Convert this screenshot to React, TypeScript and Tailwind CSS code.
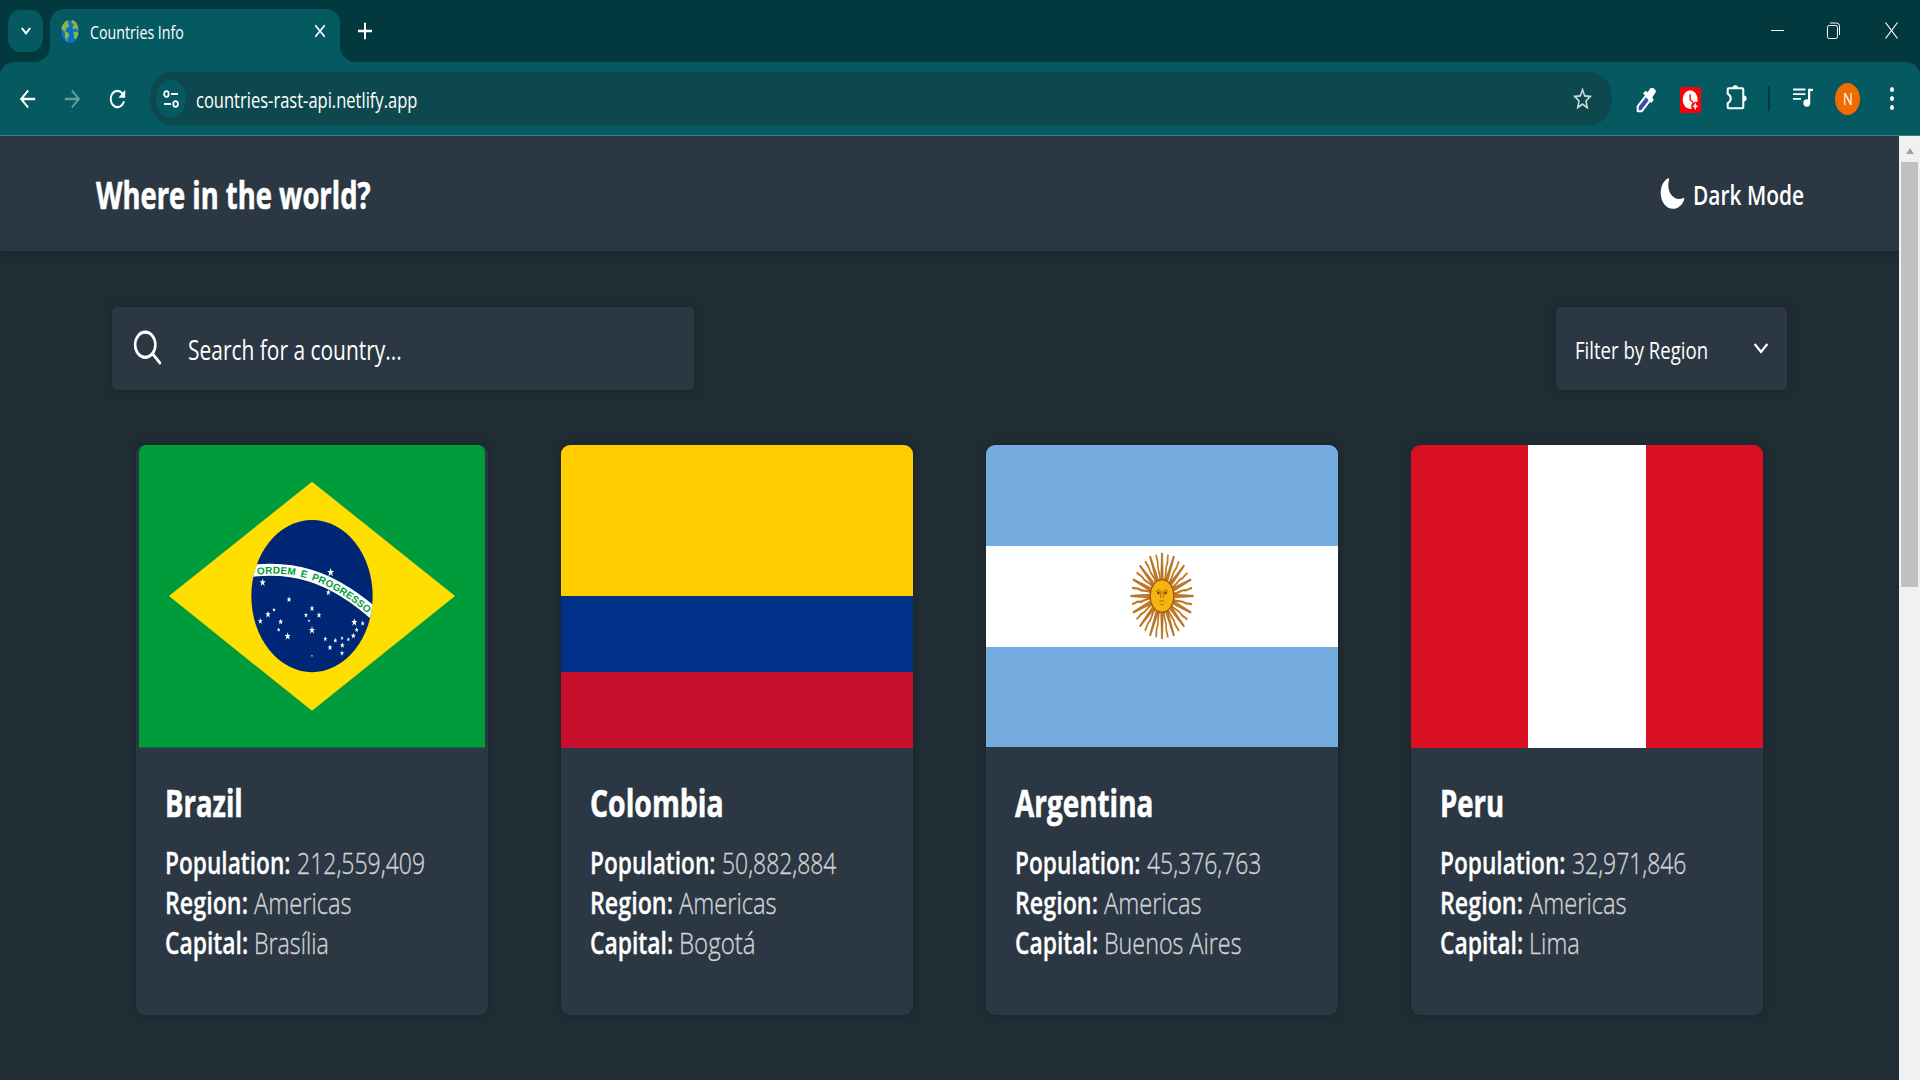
import { useLayoutEffect, useRef, useState } from "react";
import type { ReactNode } from "react";
import { MdAdd, MdArrowBack, MdArrowForward, MdClose, MdRefresh, MdStarBorder } from "react-icons/md";
import { IoMoon, IoSearchOutline } from "react-icons/io5";

/** One line of text condensed horizontally to an exact width. */
function Fit({ w, className = "", children }: { w: number; className?: string; children: ReactNode }) {
  const ref = useRef<HTMLSpanElement>(null);
  const [scale, setScale] = useState(0.8);
  useLayoutEffect(() => {
    if (ref.current) setScale(w / ref.current.offsetWidth);
  }, [w, children]);
  return (
    <span className={`block whitespace-nowrap ${className}`} style={{ width: w }}>
      <span ref={ref} className="inline-block origin-left" style={{ transform: `scaleX(${scale})` }}>
        {children}
      </span>
    </span>
  );
}

function Globe() {
  return (
    <svg viewBox="0 0 60 76" preserveAspectRatio="none" className="h-[26px] w-5">
      <ellipse cx="30" cy="39" rx="28" ry="36" fill="#0b6fc7" stroke="#17405a" strokeWidth="2" />
      <path d="M8 20 L18 8 L28 6 L24 16 L28 24 L20 30 L16 40 L6 34 L4 28Z" fill="#86b83c" />
      <path d="M14 38 L26 44 L28 52 L22 60 L22 70 L15 58Z" fill="#86b83c" />
      <path d="M36 5 L48 12 L55 26 L54 36 L46 30 L40 34 L37 26 L42 20 L34 14Z" fill="#86b83c" />
      <path d="M40 40 L52 40 L56 46 L48 62 L43 60Z" fill="#86b83c" />
      <path d="M20 2 L25 10 M34 2 L30 10" stroke="#24465a" strokeWidth="3" />
    </svg>
  );
}

function TabStrip() {
  return (
    <div className="flex h-[62px] items-start bg-[#02393e]">
      <div className="mt-2.5 ml-2 flex h-[42px] w-[35px] items-center justify-center rounded-[12px/14px] bg-[#045a60]">
        <svg viewBox="0 0 10 8" preserveAspectRatio="none" className="h-2 w-2.5 fill-none stroke-white stroke-2">
          <path d="M.8 1 L5 6.3 L9.2 1" />
        </svg>
      </div>
      <div className="relative ml-[7px] flex h-[53px] w-[290px] items-start self-end rounded-t-[14px] bg-[#045a60]">
        <svg viewBox="0 0 16 16" className="absolute bottom-0 -left-4 size-4 fill-[#045a60]">
          <path d="M16 0 V16 H0 A16 16 0 0 0 16 0Z" />
        </svg>
        <svg viewBox="0 0 16 16" className="absolute -right-4 bottom-0 size-4 fill-[#045a60]">
          <path d="M0 0 V16 H16 A16 16 0 0 1 0 0Z" />
        </svg>
        <div className="mt-[9px] ml-2.5">
          <Globe />
        </div>
        <Fit w={93.5} className="mt-[11px] ml-[9.5px] text-[19px] leading-[24px] text-white">Countries Info</Fit>
        <MdClose preserveAspectRatio="none" className="mt-[11px] ml-[128px] h-[22px] w-[18px] text-white" />
      </div>
      <MdAdd preserveAspectRatio="none" className="mt-[17px] ml-[13px] h-7 w-6 text-white" />
      <div className="mt-[22px] mr-[22px] ml-auto flex h-[17px] items-center">
        <div className="h-[1.5px] w-[13px] bg-white" />
        <svg viewBox="0 0 13 17" className="ml-[43px] h-[17px] w-[13px] fill-none stroke-white">
          <rect x=".5" y="3.5" width="10" height="13" rx="1.8" />
          <path d="M3 1 H9.5 Q12.5 1 12.5 4 V13" />
        </svg>
        <svg viewBox="0 0 13 17" className="ml-[45px] h-[17px] w-[13px] fill-none stroke-white">
          <path d="M.5 .5 L12.5 16.5 M12.5 .5 L.5 16.5" strokeWidth="1.2" />
        </svg>
      </div>
    </div>
  );
}

function Toolbar() {
  return (
    <div className="bg-[#02393e]">
      <div className="flex h-[74px] items-center rounded-t-[14px] border-b border-[#3b828a] bg-[#045a60] text-white">
        <MdArrowBack preserveAspectRatio="none" className="ml-4 h-7 w-[23px]" />
        <MdArrowForward preserveAspectRatio="none" className="ml-[22px] h-7 w-[23px] text-[#669ba0]" />
        <MdRefresh preserveAspectRatio="none" className="ml-[22px] h-7 w-[23px]" />
        <div className="ml-[21px] flex h-[53px] w-[1462px] items-center rounded-[22px/26px] bg-[#0e484f]">
          <div className="ml-1.5 flex h-[38px] w-[30px] items-center justify-center rounded-[50%] bg-[#045a60]">
            <svg viewBox="0 0 16 18" className="h-[18px] w-4 fill-none stroke-white stroke-[1.8]">
              <ellipse cx="3.4" cy="4" rx="2.3" ry="2.9" />
              <path d="M8 4 H15 M1 14 H8" />
              <ellipse cx="12.6" cy="14" rx="2.3" ry="2.9" />
            </svg>
          </div>
          <Fit w={221.5} className="ml-[10px] text-[22px] leading-[30px]">countries-rast-api.netlify.app</Fit>
          <MdStarBorder preserveAspectRatio="none" className="mr-[18px] ml-auto h-7 w-[23px] text-[#c9d6d8]" />
        </div>
        <svg viewBox="0 0 60 78" preserveAspectRatio="none" className="mt-0.5 ml-6 h-[26px] w-5">
          <path d="M5 73 L5 58 L30 26 L42 40 L17 73Z" fill="#3949b8" stroke="#fff" strokeWidth="6" strokeLinejoin="round" />
          <path d="M21 19 L29 11 L35 16 L43 4 Q56 -1 60 14 L49 31 L53 39 L46 48Z" fill="#fff" />
        </svg>
        <svg viewBox="0 0 62 78" preserveAspectRatio="none" className="mt-0.5 ml-6 h-[26px] w-[21px]">
          <rect width="62" height="78" rx="5" fill="#fb0006" />
          <ellipse cx="30" cy="38" rx="22" ry="28" fill="#fff" />
          <path d="M30 22 V38 L38 46" fill="none" stroke="#fb0006" strokeWidth="4" />
          <ellipse cx="46" cy="58" rx="13" ry="14" fill="#fb0006" />
          <path d="M45 46 L48 55 L54 58 L48 61 L45 70 L42 61 L36 58 L42 55Z" fill="#fff" />
        </svg>
        <svg viewBox="0 0 62 76" preserveAspectRatio="none" className="-mt-0.5 ml-[25px] h-[25px] w-[21px]">
          <path
            d="M5 13 Q5 10 8 10 H48 Q51 10 51 13 V68 Q51 71 48 71 H8 Q5 71 5 68 V55 Q14 50 14 41 Q14 32 5 27Z"
            fill="none"
            stroke="#fff"
            strokeWidth="6"
          />
          <path d="M19 10 Q19 1 28 1 Q36 1 36 10Z M52 32 Q61 32 61 41 Q61 50 52 50Z" fill="#fff" />
        </svg>
        <div className="ml-[21px] h-[25px] w-0.5 bg-[#02393e]" />
        <svg viewBox="0 0 58 56" preserveAspectRatio="none" className="-mt-0.5 ml-[23px] h-[19px] w-5">
          <path d="M0 4.5 H36 M0 18 H36 M0 32 H23" stroke="#fff" strokeWidth="5.5" />
          <path d="M43.5 2 H58 V9 H50 V44 H43.5Z" fill="#fff" />
          <ellipse cx="40" cy="44" rx="10" ry="11" fill="#fff" />
        </svg>
        <div className="ml-[22px] flex h-8 w-[25px] items-center justify-center rounded-[50%] bg-[#f06c00]">
          <Fit w={10} className="text-[17px] leading-8">N</Fit>
        </div>
        <div className="ml-[30px] flex flex-col gap-1">
          <div className="h-[5px] w-1 rounded-[50%] bg-white" />
          <div className="h-[5px] w-1 rounded-[50%] bg-white" />
          <div className="h-[5px] w-1 rounded-[50%] bg-white" />
        </div>
      </div>
    </div>
  );
}

const STARS: [number, number, number][] = [
  [602, 427, 10], [398, 457, 9], [595, 487, 7], [477, 508, 7], [546, 535, 7], [528, 555, 6], [567, 555, 7],
  [537, 572, 4], [546, 600, 9], [432, 539, 5], [414, 553, 8], [391, 573, 7], [452, 575, 7], [446, 599, 5],
  [473, 618, 9], [586, 626, 6], [600, 652, 7], [616, 631, 6], [636, 624, 5], [637, 645, 7], [636, 669, 6],
  [655, 628, 5], [670, 617, 7], [680, 599, 6], [698, 580, 6], [673, 576, 9], [546, 677, 3],
];

function BrazilFlag() {
  return (
    <svg viewBox="27 45 1038 907" preserveAspectRatio="none" className="mx-auto block h-[302.5px] w-[346px] rounded-t-[7px]">
      <clipPath id="sky">
        <ellipse cx="546" cy="498" rx="182" ry="228" />
      </clipPath>
      <path d="M27 45H1065V952H27Z" fill="#009c3b" />
      <path d="M117 498 L546 155 L975 498 L546 842Z" fill="#ffdf00" />
      <g clipPath="url(#sky)">
        <path d="M360 260H740V740H360Z" fill="#002776" />
        <path d="M350 424 C480 406 600 430 745 562" fill="none" stroke="#fff" strokeWidth="36" />
      </g>
      <path id="motto" d="M382 434 C492 420 602 449 730 566" fill="none" />
      <text fill="#009c3b" fontFamily="Liberation Sans, sans-serif" fontWeight="700" fontSize="30" wordSpacing="5">
        <textPath href="#motto" textLength="362" lengthAdjust="spacing">
          ORDEM E PROGRESSO
        </textPath>
      </text>
      {STARS.map(([x, y, r]) => (
        <path
          key={`${x}-${y}`}
          d="M0-1.15 L.25-.36 L.9-.36 L.38 .14 L.6 1.05 L0 .5 L-.6 1.05 L-.38 .14 L-.9-.36 L-.25-.36Z"
          transform={`translate(${x} ${y}) scale(${r * 1.12})`}
          fill="#fff"
        />
      ))}
    </svg>
  );
}

function ColombiaFlag() {
  return (
    <div className="flex h-[302.5px] flex-col">
      <div className="flex-[2] bg-[#ffcd00]" />
      <div className="flex-1 bg-[#003087]" />
      <div className="flex-1 bg-[#c8102e]" />
    </div>
  );
}

function ArgentinaFlag() {
  return (
    <div className="flex h-[302.5px] flex-col">
      <div className="flex-1 bg-[#74acdf]" />
      <div className="flex flex-1 items-center justify-center bg-white">
        <svg viewBox="-44 -44 88 88" preserveAspectRatio="none" className="h-[88px] w-[64px]">
          {Array.from({ length: 16 }, (_, i) => (
            <g key={i} transform={`rotate(${i * 22.5})`}>
              <path d="M-1.9 -15 L-.8 -43 H.8 L1.9 -15Z" fill="#c47a1c" stroke="#8a4310" strokeWidth=".5" />
              <path
                d="M0 -15 C3 -22 -1.5 -27 .5 -32 C1.8 -36 -.8 -38 .4 -42"
                transform="rotate(11.25)"
                fill="none"
                stroke="#c17a20"
                strokeWidth="2.3"
              />
            </g>
          ))}
          <circle r="16.3" fill="#f6b40e" stroke="#85340a" strokeWidth="1" />
          <g fill="none" stroke="#85340a" strokeWidth=".7">
            <path d="M-8.5 -4 Q-5 -8 -1.5 -4.5 L-2 2 M8.5 -4 Q5 -8 1.5 -4.5 L2 2 M-3.5 5.5 Q0 3.5 3.5 5.5 M-2 8.5 H2" />
          </g>
          <ellipse cx="-5" cy="-3" rx="1.8" ry="1.4" fill="#85340a" />
          <ellipse cx="5" cy="-3" rx="1.8" ry="1.4" fill="#85340a" />
        </svg>
      </div>
      <div className="flex-1 bg-[#74acdf]" />
    </div>
  );
}

function PeruFlag() {
  return (
    <div className="flex h-[302.5px]">
      <div className="flex-1 bg-[#d91023]" />
      <div className="flex-1 bg-white" />
      <div className="flex-1 bg-[#d91023]" />
    </div>
  );
}

type Sized = [text: string, width: number];
const COUNTRIES: { name: Sized; population: Sized; capital: Sized; flag: ReactNode }[] = [
  { name: ["Brazil", 78], population: ["212,559,409", 128], capital: ["Brasília", 75], flag: <BrazilFlag /> },
  { name: ["Colombia", 133.5], population: ["50,882,884", 114.5], capital: ["Bogotá", 77], flag: <ColombiaFlag /> },
  { name: ["Argentina", 138], population: ["45,376,763", 114.5], capital: ["Buenos Aires", 137.5], flag: <ArgentinaFlag /> },
  { name: ["Peru", 64], population: ["32,971,846", 114.5], capital: ["Lima", 51], flag: <PeruFlag /> },
];

function Fact({ label, value }: { label: Sized; value: Sized }) {
  return (
    <div className="flex gap-[6px] text-[30px] leading-10">
      <Fit w={label[1]} className="font-semibold text-white [-webkit-text-stroke:0.3px]">{label[0]}</Fit>
      <Fit w={value[1]} className="font-light text-[#d2d4d6] [-webkit-text-stroke:0.35px]">{value[0]}</Fit>
    </div>
  );
}

function Card({ name, population, capital, flag }: (typeof COUNTRIES)[number]) {
  return (
    <article className="h-[570px] w-[352px] overflow-hidden rounded-[9px] bg-[#2b3743] shadow-[0_0_8px_2px_rgba(0,0,0,0.18)]">
      {flag}
      <div className="mt-[29px] ml-[29px]">
        <Fit w={name[1]} className="text-[37px] leading-[52px] font-bold text-white [-webkit-text-stroke:0.6px]">{name[0]}</Fit>
        <div className="mt-[14px]">
          <Fact label={["Population:", 125.5]} value={population} />
          <Fact label={["Region:", 83]} value={["Americas", 98]} />
          <Fact label={["Capital:", 83]} value={capital} />
        </div>
      </div>
    </article>
  );
}

export default function App() {
  return (
    <div className="flex h-[1080px] w-[1920px] flex-col overflow-hidden font-['Open_Sans','Noto_Sans',sans-serif]">
      <TabStrip />
      <Toolbar />
      <div className="flex min-h-0 flex-1">
        <main className="w-[1899px] overflow-hidden bg-[#212d35]">
          <header className="flex h-[115px] items-center justify-between bg-[#2b3743] pr-[95px] pl-24 text-white shadow-[0_2px_8px_2px_rgba(0,0,0,0.18)]">
            <Fit w={274.5} className="mt-[3px] text-[37px] leading-[52px] font-bold [-webkit-text-stroke:0.6px]">Where in the world?</Fit>
            <div className="flex items-center">
              <IoMoon preserveAspectRatio="none" className="h-[35px] w-[27px]" />
              <Fit w={111} className="mt-[3px] ml-[7px] text-[27.5px] leading-[38px] font-semibold">Dark Mode</Fit>
            </div>
          </header>
          <div className="mt-14 flex justify-between pr-28 pl-28 text-white">
            <div className="flex h-[83px] w-[582px] items-center rounded-[5px] bg-[#2b3743] shadow-[0_0_10px_3px_rgba(0,0,0,0.16)]">
              <IoSearchOutline preserveAspectRatio="none" className="-mt-0.5 ml-[18.5px] h-[41px] w-[33px] [&_line]:stroke-[40px] [&_path]:stroke-[40px]" />
              <Fit w={214} className="mt-0.5 ml-[24.5px] text-[27.5px] leading-[38px]">Search for a country...</Fit>
            </div>
            <div className="flex h-[83px] w-[231px] items-center rounded-[5px] bg-[#2b3743] shadow-[0_0_10px_3px_rgba(0,0,0,0.16)]">
              <Fit w={133} className="mt-0.5 ml-[18.5px] text-[24px] leading-[34px]">Filter by Region</Fit>
              <svg viewBox="0 0 14 11" className="ml-[46.5px] h-[11px] w-3.5 fill-none stroke-white stroke-[2.2]">
                <path d="M.7 1 L7 9 L13.3 1" />
              </svg>
            </div>
          </div>
          <div className="mt-[55px] flex gap-[73px] pl-[136px]">
            {COUNTRIES.map((country) => (
              <Card key={country.name[0]} {...country} />
            ))}
          </div>
        </main>
        <div className="flex w-[21px] flex-col items-center bg-[#f1f1f1]">
          <div className="mt-[12px] h-0 w-0 border-x-[4.5px] border-b-[6px] border-x-transparent border-b-[#a3a3a3]" />
          <div className="mt-2 h-[425px] w-[17px] bg-[#c1c1c1]" />
        </div>
      </div>
    </div>
  );
}
